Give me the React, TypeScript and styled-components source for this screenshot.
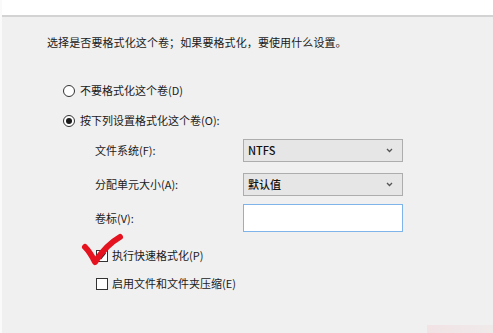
import styled, { createGlobalStyle } from "styled-components";

const GlobalStyle = createGlobalStyle`
  html, body {
    margin: 0;
    padding: 0;
    background: #f0f0f0;
  }
  body {
    font-family: "Noto Sans CJK SC", "Noto Sans", sans-serif;
    font-size: 11px;
    color: #1a1a1a;
  }
`;

const Page = styled.div`
  position: relative;
  width: 493px;
  height: 333px;
  overflow: hidden;
  background: #f0f0f0;
  border-left: 2px solid #fafafa;
  box-sizing: border-box;
`;

const TopBar = styled.div`
  height: 15px;
  background: #ffffff;
  border-bottom: 2px solid #d3d3d3;
`;

const Body = styled.div`
  display: flex;
  flex-direction: column;
  padding: 17px 0 0 45px;
`;

const Intro = styled.div`
  line-height: 17px;
  letter-spacing: 0.1px;
`;

const OptionList = styled.div`
  display: flex;
  flex-direction: column;
  gap: 13px;
  margin-top: 31px;
  padding-left: 16px;
`;

const OptionRow = styled.label`
  display: flex;
  align-items: center;
  gap: 5px;
  height: 17px;
  line-height: 17px;
`;

const RadioDot = styled.span<{ $checked?: boolean }>`
  width: 10px;
  height: 10px;
  border: 1px solid #333;
  border-radius: 50%;
  background: #fff;
  display: flex;
  align-items: center;
  justify-content: center;
  flex-shrink: 0;

  &::after {
    content: "";
    width: 6px;
    height: 6px;
    border-radius: 50%;
    background: ${({ $checked }) => ($checked ? "#1a1a1a" : "transparent")};
  }
`;

const Form = styled.div`
  display: flex;
  flex-direction: column;
  margin-top: 4px;
  padding-left: 48px;
`;

const FormRow = styled.div`
  display: grid;
  grid-template-columns: 148px 160px;
  align-items: center;
  height: 34px;
`;

const SelectBox = styled.div`
  height: 23px;
  box-sizing: border-box;
  border: 1px solid #adadad;
  background: #e6e6e6;
  display: flex;
  align-items: center;
  justify-content: space-between;
  padding: 0 9px 0 4px;
  font-weight: 500;
  color: #111;
`;

const TextBox = styled.div`
  height: 28px;
  box-sizing: border-box;
  border: 1px solid #7eb4ea;
  background: #ffffff;
`;

const CheckList = styled.div`
  display: flex;
  flex-direction: column;
  gap: 11px;
  margin-top: 12px;
  padding-left: 49px;
`;

const CheckBox = styled.span`
  position: relative;
  width: 12px;
  height: 12px;
  box-sizing: border-box;
  border: 1px solid #333;
  background: #fff;
  flex-shrink: 0;
  display: flex;
  align-items: center;
  justify-content: center;
`;

const CheckRow = styled(OptionRow)`
  gap: 4px;
`;

const RedMark = styled.svg`
  position: absolute;
  left: 78px;
  top: 232px;
  pointer-events: none;
`;

const Watermark = styled.div`
  position: absolute;
  left: 425px;
  top: 325px;
  width: 68px;
  height: 8px;
  background: linear-gradient(90deg, #f2e3e5, #efeaea);
`;

const Chevron = () => (
  <svg width="7" height="5" viewBox="0 0 7 5">
    <path d="M1 1 L3.5 3.5 L6 1" fill="none" stroke="#555" strokeWidth="1.3" />
  </svg>
);

const App = () => {
  return (
    <Page>
      <GlobalStyle />
      <TopBar />
      <Body>
        <Intro>选择是否要格式化这个卷；如果要格式化，要使用什么设置。</Intro>
        <OptionList>
          <OptionRow>
            <RadioDot />
            不要格式化这个卷(D)
          </OptionRow>
          <OptionRow>
            <RadioDot $checked />
            按下列设置格式化这个卷(O):
          </OptionRow>
        </OptionList>
        <Form>
          <FormRow>
            <span>文件系统(F):</span>
            <SelectBox>
              NTFS
              <Chevron />
            </SelectBox>
          </FormRow>
          <FormRow>
            <span>分配单元大小(A):</span>
            <SelectBox>
              默认值
              <Chevron />
            </SelectBox>
          </FormRow>
          <FormRow>
            <span>卷标(V):</span>
            <TextBox />
          </FormRow>
        </Form>
        <CheckList>
          <CheckRow>
            <CheckBox>
              <svg width="10" height="10" viewBox="0 0 10 10">
                <path d="M1.5 5 L4 7.5 L8.5 2" fill="none" stroke="#222" strokeWidth="1.3" />
              </svg>
            </CheckBox>
            执行快速格式化(P)
          </CheckRow>
          <CheckRow>
            <CheckBox />
            启用文件和文件夹压缩(E)
          </CheckRow>
        </CheckList>
      </Body>
      <RedMark width="46" height="36" viewBox="0 0 46 36">
        <path
          d="M5 15 Q10 20 15 30 Q26 13 40 5"
          fill="none"
          stroke="#e4131f"
          strokeWidth="6"
          strokeLinecap="round"
          strokeLinejoin="round"
        />
      </RedMark>
      <Watermark />
    </Page>
  );
};

export default App;
